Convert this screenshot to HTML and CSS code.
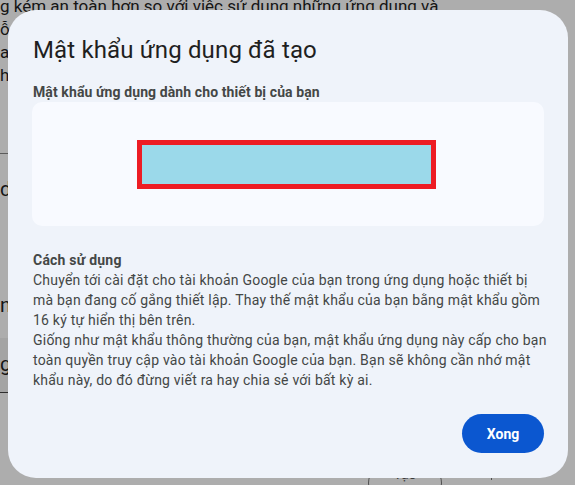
FILE: index.html
```html
<!DOCTYPE html>
<html lang="vi">
<head>
<meta charset="utf-8">
<link rel="stylesheet" href="styles.css">
</head>
<body>
<div class="page">
  <p class="bg-line bg-top">g kém an toàn hơn so với việc sử dụng những ứng dụng và</p>
  <p class="bg-line">ỗ</p>
  <p class="bg-line">ar</p>
  <p class="bg-line">h</p>
  <div class="bg-rule"></div>
  <p class="bg-line bg-d">d</p>
  <p class="bg-line bg-n">n</p>
  <div class="bg-field"><span>g</span></div>
  <div class="bg-bottom"><span class="bg-pill">Tạo</span><span class="bg-vline"></span></div>
</div>
<div class="scrim"></div>
<div class="dialog">
  <h1 class="title">Mật khẩu ứng dụng đã tạo</h1>
  <h2 class="subtitle">Mật khẩu ứng dụng dành cho thiết bị của bạn</h2>
  <div class="pw-box">
    <div class="pw-redact"></div>
  </div>
  <div class="usage">
    <h3 class="usage-title">Cách sử dụng</h3>
    <p class="usage-text">Chuyển tới cài đặt cho tài khoản Google của bạn trong ứng dụng hoặc thiết bị<br>mà bạn đang cố gắng thiết lập. Thay thế mật khẩu của bạn bằng mật khẩu gồm<br>16 ký tự hiển thị bên trên.</p>
    <p class="usage-text">Giống như mật khẩu thông thường của bạn, mật khẩu ứng dụng này cấp cho bạn<br>toàn quyền truy cập vào tài khoản Google của bạn. Bạn sẽ không cần nhớ mật<br>khẩu này, do đó đừng viết ra hay chia sẻ với bất kỳ ai.</p>
  </div>
  <div class="actions">
    <button class="btn-done">Xong</button>
  </div>
</div>
</body>
</html>
```
FILE: styles.css
```css
* { box-sizing: border-box; }
html, body { margin: 0; padding: 0; }
body {
  width: 575px;
  height: 485px;
  overflow: hidden;
  background: #ffffff;
  font-family: Roboto, "Noto Sans", Arial, sans-serif;
  color: #1f1f1f;
}
.page {
  position: relative;
  height: 485px;
  color: #1f1f1f;
}
.bg-line {
  margin: 0;
  font-size: 17px;
  line-height: 23px;
  height: 23px;
  padding-left: 0;
}
.bg-top { margin-top: -5px; }
.bg-rule {
  margin-top: 66px;
  width: 40px;
  border-top: 1px solid #888;
}
.bg-d { margin-top: 24px; font-size: 20px; }
.bg-n { margin-top: 93px; font-size: 20px; }
.bg-field {
  margin-top: 21px;
  height: 55px;
  width: 40px;
  background: #f2f2f2;
  border-bottom: 1px solid #444;
  font-size: 20px;
  padding-top: 14px;
}
.bg-bottom {
  position: absolute;
  left: 0; right: 0; bottom: 0;
  height: 12px;
}
.bg-pill {
  position: absolute;
  left: 368px;
  top: -5px;
  width: 74px;
  height: 40px;
  border: 1px solid #777;
  border-radius: 20px;
  text-align: center;
  font-size: 14px;
  line-height: 20px;
  color: #555;
}
.bg-vline {
  position: absolute;
  left: 491px;
  top: 0;
  height: 12px;
  border-left: 1px solid #777;
}
.scrim {
  position: fixed;
  inset: 0;
  background: rgba(0, 0, 0, 0.32);
}
.dialog {
  position: fixed;
  left: 8px;
  top: 10px;
  width: 560px;
  height: 468px;
  background: #eff3fa;
  border-radius: 28px;
  padding: 24px 24px 25px 25px;
  display: flex;
  flex-direction: column;
}
.title {
  margin: 0;
  font-weight: 400;
  font-size: 24px;
  line-height: 32px;
  color: #1f1f1f;
  letter-spacing: 0.15px;
}
.subtitle {
  margin: 16px 0 0;
  font-size: 14px;
  font-weight: 700;
  line-height: 20px;
  color: #444746;
  letter-spacing: 0.1px;
}
.pw-box {
  margin: 0 0 0 -1px;
  height: 124px;
  width: 512px;
  background: #f8faff;
  border-radius: 10px;
  display: flex;
  align-items: center;
  justify-content: center;
}
.pw-redact {
  width: 299px;
  height: 49px;
  background: #9bd9ea;
  border: 5px solid #ed1c24;
  margin-right: 3px;
}
.usage {
  margin-top: 24px;
  color: #444746;
  font-size: 14px;
  line-height: 20px;
  width: 530px;
  letter-spacing: 0.22px;
}
.usage-title {
  margin: 0;
  font-size: 14px;
  font-weight: 700;
  line-height: 20px;
}
.usage-text { margin: 0; white-space: nowrap; }
.actions {
  margin-top: auto;
  display: flex;
  justify-content: flex-end;
  padding-right: 0;
}
.btn-done {
  width: 82px;
  height: 39px;
  border: none;
  border-radius: 20px;
  background: #0b57d0;
  color: #ffffff;
  font-family: Roboto, "Noto Sans", Arial, sans-serif;
  font-size: 14px;
  font-weight: 700;
}
```
